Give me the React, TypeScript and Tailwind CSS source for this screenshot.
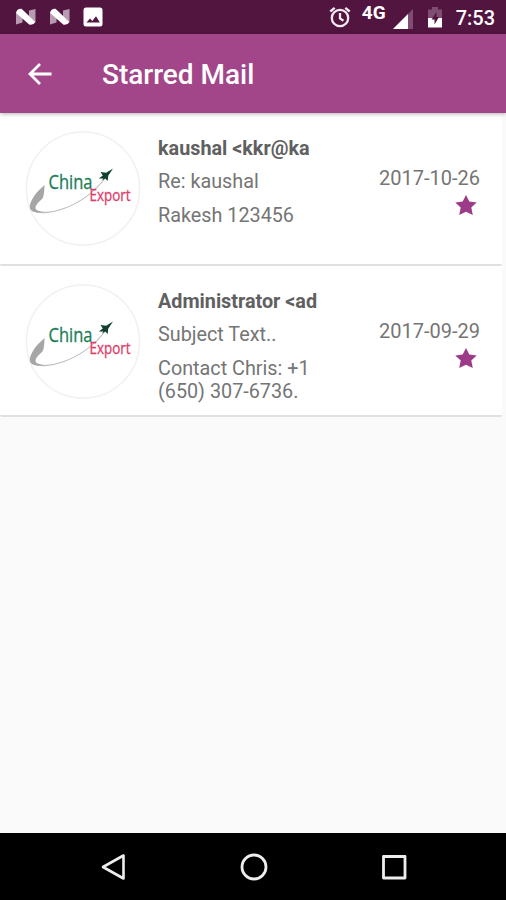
const mails = [
  { id: 1, from: "kaushal <kkr@ka", subject: "Re: kaushal", body: "Rakesh 123456", date: "2017-10-26" },
  { id: 2, from: "Administrator <ad", subject: "Subject Text..", body: "Contact Chris: +1 (650) 307-6736.", date: "2017-09-29" },
];

type Mail = (typeof mails)[number];

export default function App() {
  return (
    <div className="flex h-[900px] w-[506px] flex-col overflow-hidden bg-[#fafafa] font-['Roboto',sans-serif]">
      <StatusBar />
      <header className="z-10 flex h-[79px] shrink-0 items-center bg-[#a24689] pl-[27px] text-white shadow-[0_1px_4px_rgba(0,0,0,0.3)]">
        <svg width="25" height="24" viewBox="0 0 25 24" fill="none" stroke="currentColor" strokeWidth="2.8">
          <path d="M24.500 12H3M13 2 3 12l10 10" />
        </svg>
        <h1 className="mt-0.5 ml-[50px] text-[28px] leading-[32px] font-medium tracking-[-0.01px] whitespace-nowrap">Starred Mail</h1>
      </header>
      <main className="flex-1">
        {mails.map((m) => (
          <MailCard key={m.id} mail={m} />
        ))}
      </main>
      <NavBar />
    </div>
  );
}

function MailCard({ mail }: { mail: Mail }) {
  return (
    <article className="mr-1 flex h-[153px] rounded-b-[2px] border-b-2 border-[#e0e0e0] bg-white pl-[25px] last:h-[151px]">
      <Logo />
      <div className="ml-[17px] w-[165px] pt-6 text-[19.8px] leading-[23px] text-[#757575]">
        <div className="font-bold whitespace-nowrap text-[#606060]">{mail.from}</div>
        <div className="mt-[10px] whitespace-nowrap">{mail.subject}</div>
        <div className="mt-[11px]">{mail.body}</div>
      </div>
      <div className="mr-[22px] ml-auto flex flex-col items-end pt-[54px] text-[20px] leading-[23px] text-[#757575]">
        <span>{mail.date}</span>
        <svg className="mt-[5px] mr-[3px]" width="22" height="20" viewBox="0 0 22 20" fill="#9c3c88">
          <path d="m11 0 3.300 6.600 7.400.9-5.400 5.100 1.500 7.300L11 16.700l-6.800 3.200 1.500-7.300L.3 7.500l7.400-.9z" />
        </svg>
      </div>
    </article>
  );
}

function Logo() {
  return (
    <svg className="mt-[18px] shrink-0" width="116" height="116" viewBox="0 0 116 116">
      <circle cx="58" cy="57.500" r="56.600" fill="#fff" stroke="#f1f1f1" strokeWidth="1.500" />
      <path d="M8 80c7 3 20 1.500 31-2.500C54 72 69 62 81 46" fill="none" stroke="#bdbdbd" strokeWidth="1.100" />
      <path d="M19.500 54c-4 4-7.500 6.500-10 10.500C6 70 3.500 75 5.500 78.500c1.500 2.800 7 3.600 15 2.500-6-.3-9.500-1.500-10-4 0-3.500 3.500-6 7-9.500 1.800-3.500 1.800-8 2-13.500z" fill="#a6a6a6" />
      <path d="m88 37.500-6.800 4.300-5.700-.8 2.300 3.400-4 3h4.400L77 49.500l3.300-2 2.400 2.500.5-5.300z" fill="#12402e" />
      <text x="23.500" y="57.500" textLength="44" lengthAdjust="spacingAndGlyphs" fontFamily="Open Sans" fontSize="19.500" fill="#1d7d57" stroke="#1d7d57" strokeWidth=".3">
        China
      </text>
      <text x="64.500" y="70" textLength="41" lengthAdjust="spacingAndGlyphs" fontFamily="Open Sans" fontSize="15.500" fill="#e03c69" stroke="#e03c69" strokeWidth=".3">
        Export
      </text>
    </svg>
  );
}

function StatusBar() {
  return (
    <div className="flex h-[34px] shrink-0 items-center bg-[#52153f] pr-[11px] pl-[15px] text-white">
      <Nougat />
      <Nougat className="ml-[13px]" />
      <svg className="ml-[13px]" width="20" height="20" viewBox="0 0 20 20">
        <rect x=".5" y=".5" width="19" height="19" rx="2.500" fill="#fff" />
        <path d="m3.500 15.500 3.500-4 2.300 2.500 3.700-4.800 3.800 6.300z" fill="#52153f" />
      </svg>
      <svg className="ml-auto" width="22" height="22" viewBox="0 0 22 22" fill="none" stroke="#f3eaf0" strokeWidth="2.300">
        <circle cx="11" cy="12" r="8.200" />
        <path d="M11 7v5.500l3.500 2.300M1.300 5.500l4.400-3.700M20.700 5.500l-4.400-3.700" />
      </svg>
      <span className="mb-[8px] ml-[11px] text-[19px] leading-5 font-bold">4G</span>
      <svg className="mt-[3px] ml-[7px]" width="20" height="20" viewBox="0 0 20 20">
        <path d="M20 0v20H0z" fill="#7f4d71" />
        <path d="M15 5v15H0z" fill="#fff" />
      </svg>
      <svg className="mt-[1px] ml-[15px]" width="14" height="21" viewBox="0 0 14 21">
        <path d="M4 0h6v2.500h4V12H0V2.500h4z" fill="#7f4d71" />
        <path d="M0 11h14v9.500H0z" fill="#fff" />
        <path d="M8.500 5 3.500 12.500h3v5l4.500-7.500H8.500z" fill="#52153f" />
      </svg>
      <span className="mt-0.5 ml-[14px] text-[20px] leading-6 font-medium">7:53</span>
    </div>
  );
}

function Nougat({ className }: { className?: string }) {
  return (
    <svg className={className} width="21" height="18" viewBox="0 0 21 18">
      <path d="M1 4.500 7.500 10v4.500L1 16.500zM20.500 1v13L14 8.500v-6z" fill="#b79bb0" />
      <path d="M1 5Q2 .5 6.500.8L20.500 14q-2 3.300-6 2.700z" fill="#fff" />
    </svg>
  );
}

function NavBar() {
  return (
    <nav className="flex h-[67px] shrink-0 items-center justify-between bg-black pr-[99px] pl-[99px]">
      <svg width="28" height="28" viewBox="0 0 28 28" fill="none" stroke="#eee" strokeWidth="2.600" strokeLinejoin="round">
        <path d="M24.500 2.500v23L4 14z" />
      </svg>
      <svg className="mr-px" width="28" height="28" viewBox="0 0 28 28" fill="none" stroke="#eee" strokeWidth="2.800">
        <circle cx="14" cy="14" r="12" />
      </svg>
      <svg width="26" height="26" viewBox="0 0 26 26" fill="none" stroke="#eee" strokeWidth="2.800" strokeLinejoin="round">
        <rect x="2.500" y="2.500" width="21.500" height="21.500" />
      </svg>
    </nav>
  );
}
